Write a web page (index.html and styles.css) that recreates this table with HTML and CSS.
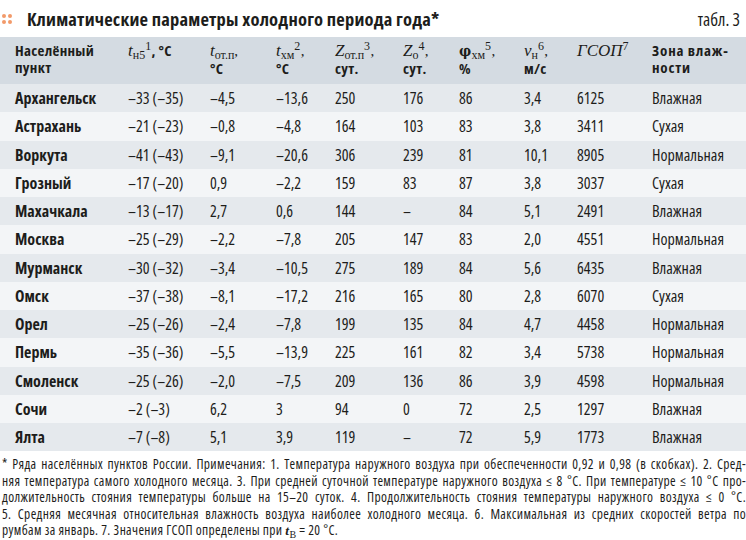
FILE: index.html
```html
<!DOCTYPE html>
<html lang="ru">
<head>
<meta charset="utf-8">
<link rel="stylesheet" href="styles.css">
</head>
<body>
<div class="titlebar">
  <div class="title"><span class="dots"><i></i><i></i><i></i><i></i></span>Климатические параметры холодного периода года*</div>
  <div class="tabl">табл. 3</div>
</div>
<table class="data">
  <colgroup>
    <col style="width:128px"><col style="width:82px"><col style="width:66px"><col style="width:59px"><col style="width:68px"><col style="width:56px"><col style="width:65px"><col style="width:53px"><col style="width:75px"><col>
  </colgroup>
  <thead>
    <tr>
      <th>Населённый<br>пункт</th>
      <th><span class="m">t</span><span class="sb">н5</span><span class="sp">1</span>, °C</th>
      <th><span class="m">t</span><span class="sb">от.п</span><span class="cm">,</span><br>°C</th>
      <th><span class="m">t</span><span class="sb">хм</span><span class="sp">2</span><span class="cm">,</span><br>°C</th>
      <th><span class="m">Z</span><span class="sb">от.п</span><span class="sp">3</span><span class="cm">,</span><br>сут.</th>
      <th><span class="m">Z</span><span class="sb">о</span><span class="sp">4</span><span class="cm">,</span><br>сут.</th>
      <th><span class="phi">φ</span><span class="sb">хм</span><span class="sp">5</span><span class="cm">,</span><br>%</th>
      <th><span class="m">v</span><span class="sb">н</span><span class="sp">6</span><span class="cm">,</span><br>м/с</th>
      <th><span class="m">ГСОП</span><span class="sp">7</span></th>
      <th class="zone">Зона влаж-<br>ности</th>
    </tr>
  </thead>
  <tbody>
    <tr><td>Архангельск</td><td>–33 (–35)</td><td>–4,5</td><td>–13,6</td><td>250</td><td>176</td><td>86</td><td>3,4</td><td>6125</td><td>Влажная</td></tr>
    <tr><td>Астрахань</td><td>–21 (–23)</td><td>–0,8</td><td>–4,8</td><td>164</td><td>103</td><td>83</td><td>3,8</td><td>3411</td><td>Сухая</td></tr>
    <tr><td>Воркута</td><td>–41 (–43)</td><td>–9,1</td><td>–20,6</td><td>306</td><td>239</td><td>81</td><td>10,1</td><td>8905</td><td>Нормальная</td></tr>
    <tr><td>Грозный</td><td>–17 (–20)</td><td>0,9</td><td>–2,2</td><td>159</td><td>83</td><td>87</td><td>3,8</td><td>3037</td><td>Сухая</td></tr>
    <tr><td>Махачкала</td><td>–13 (–17)</td><td>2,7</td><td>0,6</td><td>144</td><td>–</td><td>84</td><td>5,1</td><td>2491</td><td>Влажная</td></tr>
    <tr><td>Москва</td><td>–25 (–29)</td><td>–2,2</td><td>–7,8</td><td>205</td><td>147</td><td>83</td><td>2,0</td><td>4551</td><td>Нормальная</td></tr>
    <tr><td>Мурманск</td><td>–30 (–32)</td><td>–3,4</td><td>–10,5</td><td>275</td><td>189</td><td>84</td><td>5,6</td><td>6435</td><td>Влажная</td></tr>
    <tr><td>Омск</td><td>–37 (–38)</td><td>–8,1</td><td>–17,2</td><td>216</td><td>165</td><td>80</td><td>2,8</td><td>6070</td><td>Сухая</td></tr>
    <tr><td>Орел</td><td>–25 (–26)</td><td>–2,4</td><td>–7,8</td><td>199</td><td>135</td><td>84</td><td>4,7</td><td>4458</td><td>Нормальная</td></tr>
    <tr><td>Пермь</td><td>–35 (–36)</td><td>–5,5</td><td>–13,9</td><td>225</td><td>161</td><td>82</td><td>3,4</td><td>5738</td><td>Нормальная</td></tr>
    <tr><td>Смоленск</td><td>–25 (–26)</td><td>–2,0</td><td>–7,5</td><td>209</td><td>136</td><td>86</td><td>3,9</td><td>4598</td><td>Нормальная</td></tr>
    <tr><td>Сочи</td><td>–2 (–3)</td><td>6,2</td><td>3</td><td>94</td><td>0</td><td>72</td><td>2,5</td><td>1297</td><td>Влажная</td></tr>
    <tr><td>Ялта</td><td>–7 (–8)</td><td>5,1</td><td>3,9</td><td>119</td><td>–</td><td>72</td><td>5,9</td><td>1773</td><td>Влажная</td></tr>
  </tbody>
</table>
<div class="note">
  <span class="ln">* Ряда населённых пунктов России. Примечания: 1. Температура наружного воздуха при обеспеченности 0,92 и 0,98 (в скобках). 2. Сред-</span>
  <span class="ln">няя температура самого холодного месяца. 3. При средней суточной температуре наружного воздуха ≤ 8 °C. При температуре ≤ 10 °C про-</span>
  <span class="ln">должительность стояния температуры больше на 15–20 суток. 4. Продолжительность стояния температуры наружного воздуха ≤ 0 °C.</span>
  <span class="ln">5. Средняя месячная относительная влажность воздуха наиболее холодного месяца. 6. Максимальная из средних скоростей ветра по</span>
  <span class="ln last">румбам за январь. 7. Значения ГСОП определены при <span class="tb">t</span><span class="tbs">В</span> = 20 °C.</span>
</div>
</body>
</html>
```
FILE: styles.css
```css
html, body {
  margin: 0;
  padding: 0;
  background: #ffffff;
}
body {
  width: 746px;
  font-family: "Open Sans", "Noto Sans", sans-serif;
  font-stretch: 75%;
  color: #1d1d1b;
}
.titlebar {
  height: 37px;
  display: flex;
  align-items: center;
  justify-content: space-between;
  padding: 0 6px 0 2px;
  box-sizing: border-box;
}
.title {
  display: flex;
  align-items: center;
  font-weight: bold;
  font-size: 18.5px;
  letter-spacing: 0.2px;
}
.dots {
  display: grid;
  grid-template-columns: 4px 4px;
  gap: 2px;
  margin-right: 15px;
}
.dots i {
  width: 4px;
  height: 4px;
  border-radius: 50%;
  background: #f29a6a;
}
.tabl {
  font-size: 17.5px;
}
.data {
  border-collapse: collapse;
  table-layout: fixed;
  width: 746px;
  font-size: 16px;
}
.data th {
  background: #d4dbe2;
  text-align: left;
  vertical-align: top;
  font-weight: bold;
  font-size: 15px;
  letter-spacing: 0.3px;
  line-height: 17px;
  height: 47px;
  padding: 5px 0 0 0;
  box-sizing: border-box;
  white-space: nowrap;
}
.data th.zone {
  letter-spacing: 0.8px;
}
.data th:first-child, .data td:first-child {
  padding-left: 15px;
}
.data td {
  height: 28.25px;
  padding: 0;
  vertical-align: middle;
  line-height: 18px;
}
.data td:first-child {
  font-weight: bold;
}
.data tbody tr:nth-child(odd) td {
  background: #e5e9ed;
}
.data tbody tr:nth-child(even) td {
  background: #f3f5f7;
}
.m {
  font-family: "Liberation Serif", serif;
  font-style: italic;
  font-weight: normal;
  font-size: 17px;
  letter-spacing: 0;
  line-height: 0;
}
.phi {
  font-family: "DejaVu Serif", serif;
  font-weight: bold;
  font-size: 15px;
  line-height: 0;
}
.sb {
  font-family: "Liberation Serif", serif;
  font-weight: normal;
  font-size: 12px;
  letter-spacing: 0;
  line-height: 0;
  position: relative;
  top: 3px;
}
.sp {
  font-family: "Liberation Serif", serif;
  font-weight: normal;
  font-size: 12px;
  line-height: 0;
  position: relative;
  top: -6px;
}
.cm {
  font-family: "Liberation Serif", serif;
  font-weight: normal;
}
.note {
  padding: 5px 0 0 2px;
  font-size: 13.5px;
  letter-spacing: 0.35px;
  line-height: 16.5px;
}
.ln {
  display: block;
  white-space: nowrap;
  text-align: justify;
  text-align-last: justify;
}
.ln.last {
  text-align-last: left;
}
.tb {
  font-family: "Liberation Serif", serif;
  font-weight: bold;
  font-style: italic;
}
.tbs {
  font-family: "Liberation Serif", serif;
  font-size: 10px;
  line-height: 0;
  position: relative;
  top: 3px;
}
```
